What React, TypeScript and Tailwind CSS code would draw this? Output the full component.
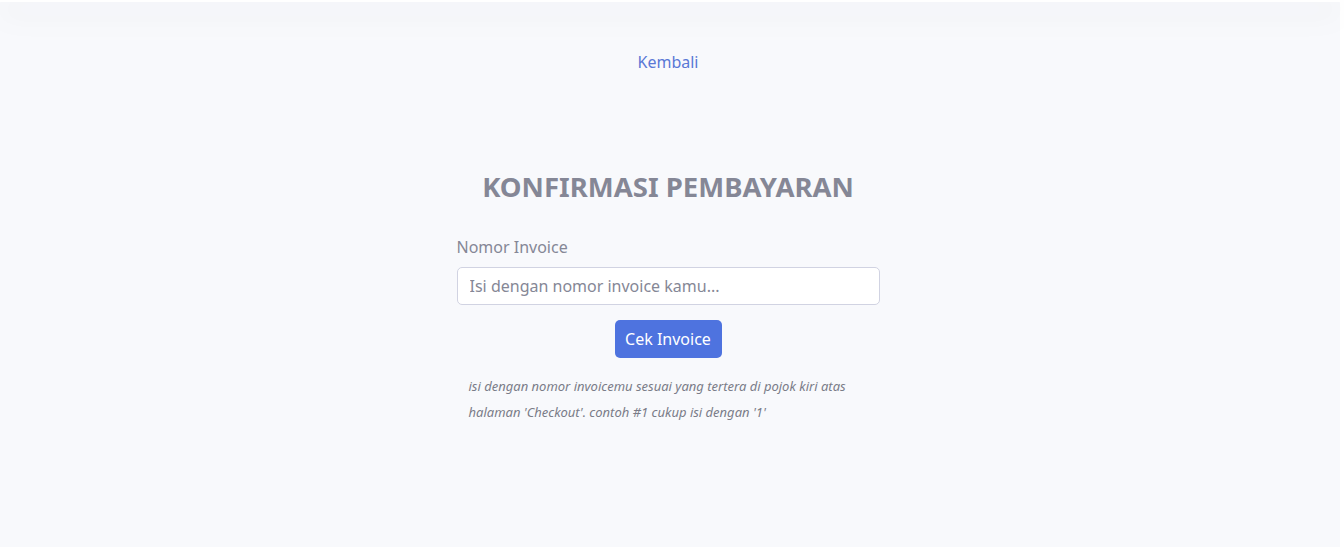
export default function App() {
  return (
    <div className="flex h-[547px] bg-white font-['Noto_Sans',sans-serif]">
      <div className="flex flex-1 flex-col bg-[#f8f9fc]">
        <div className="h-[2px] bg-white shadow-[0_8px_30px_rgba(58,59,69,0.28)]" />
        <div className="flex flex-col items-center pr-[4px]">
          <a href="#" className="mt-[48px] text-[16px] leading-[24px] text-[#5a78d6]">
            Kembali
          </a>
          <h1 className="mt-[95px] text-[27.5px] font-bold leading-[36px] text-[#858796]">
            KONFIRMASI PEMBAYARAN
          </h1>
          <form className="mt-[30px] flex w-[423px] flex-col">
            <label className="text-[16px] leading-[24px] text-[#858796]">Nomor Invoice</label>
            <input
              type="text"
              placeholder="Isi dengan nomor invoice kamu..."
              className="mt-[8px] h-[38px] rounded-[5px] border border-[#d1d3e2] bg-white px-[12px] text-[16px] text-[#6e707e] placeholder:text-[#858796]"
            />
            <div className="mt-[15px] flex justify-center">
              <button
                type="button"
                className="h-[38px] w-[107px] rounded-[5px] bg-[#4e73df] text-[16px] text-white"
              >
                Cek Invoice
              </button>
            </div>
            <p className="mt-[15px] px-[12px] text-[13px] italic leading-[26px] text-[#7a7c88]">
              isi dengan nomor invoicemu sesuai yang tertera di pojok kiri atas halaman 'Checkout'. contoh #1 cukup isi dengan '1'
            </p>
          </form>
        </div>
      </div>
      <div className="w-[4px]" />
    </div>
  );
}
